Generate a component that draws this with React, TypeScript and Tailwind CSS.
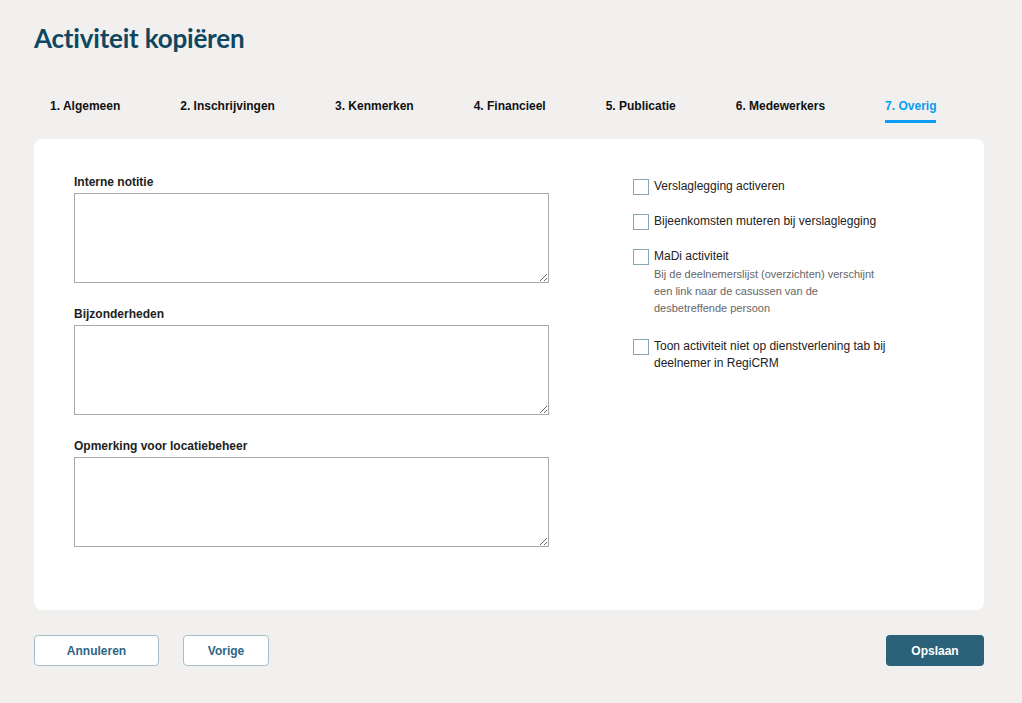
import React from "react";

const tabs = [
  "1. Algemeen",
  "2. Inschrijvingen",
  "3. Kenmerken",
  "4. Financieel",
  "5. Publicatie",
  "6. Medewerkers",
  "7. Overig",
];

function Field({ label }: { label: string }) {
  return (
    <div className="flex flex-col">
      <label className="text-[12px] font-bold text-[#222] leading-[14px] mb-[4px]">{label}</label>
      <textarea className="w-[475px] h-[90px] border border-[#a9a9a9] bg-white resize-y outline-none" />
    </div>
  );
}

function Check({ children }: { children: React.ReactNode }) {
  return (
    <div className="flex items-start gap-[5px]">
      <span className="block w-[16px] h-[16px] border border-[#86a6b6] bg-white shrink-0" />
      <div className="text-[12px] text-[#222] leading-[17px] -mt-[1px]">{children}</div>
    </div>
  );
}

export default function App() {
  return (
    <div
      className="min-h-[703px] bg-[#f1f0ef] pl-[34px] pr-[38px] pb-[37px]"
      style={{ fontFamily: '"Liberation Sans", Arial, sans-serif' }}
    >
      <h1
        className="pt-[22px] text-[26px] leading-[32px] font-bold text-[#10475f] tracking-[-0.2px]"
        style={{ fontFamily: 'Lato, "Open Sans", sans-serif' }}
      >
        Activiteit kopiëren
      </h1>
      <nav className="mt-[44px] flex gap-[60px] pl-[16px]">
        {tabs.map((t, i) => {
          const active = i === tabs.length - 1;
          return (
            <div
              key={t}
              className={
                active
                  ? "text-[12px] font-bold leading-[16px] pb-[6px] border-b-[3px] border-[#0b9cf3] text-[#0b9cf3]"
                  : "text-[12px] font-bold leading-[16px] pb-[6px] border-b-[3px] border-transparent text-[#111]"
              }
            >
              {t}
            </div>
          );
        })}
      </nav>
      <div className="mt-[16px] bg-white rounded-[8px] h-[471px] flex pl-[40px] pt-[36px]">
        <div className="flex flex-col gap-[24px]">
          <Field label="Interne notitie" />
          <Field label="Bijzonderheden" />
          <Field label="Opmerking voor locatiebeheer" />
        </div>
        <div className="ml-[84px] pt-[4px] flex flex-col">
          <Check>Verslaglegging activeren</Check>
          <div className="h-[19px]" />
          <Check>Bijeenkomsten muteren bij verslaglegging</Check>
          <div className="h-[19px]" />
          <Check>
            <div>MaDi activiteit</div>
            <div className="text-[11px] text-[#666] leading-[17px] w-[230px] mt-[1px]">
              Bij de deelnemerslijst (overzichten) verschijnt een link naar de casussen van de desbetreffende persoon
            </div>
          </Check>
          <div className="h-[22px]" />
          <Check>
            <div className="w-[240px]">Toon activiteit niet op dienstverlening tab bij deelnemer in RegiCRM</div>
          </Check>
        </div>
      </div>
      <div className="mt-[25px] flex items-center">
        <button className="w-[125px] h-[31px] rounded-[4px] border border-[#a6bdca] bg-white text-[12px] font-bold text-[#2e6584]">
          Annuleren
        </button>
        <button className="ml-[24px] w-[86px] h-[31px] rounded-[4px] border border-[#a6bdca] bg-white text-[12px] font-bold text-[#2e6584]">
          Vorige
        </button>
        <button className="ml-auto w-[98px] h-[31px] rounded-[4px] bg-[#2b6179] text-[12px] font-bold text-white">
          Opslaan
        </button>
      </div>
    </div>
  );
}
